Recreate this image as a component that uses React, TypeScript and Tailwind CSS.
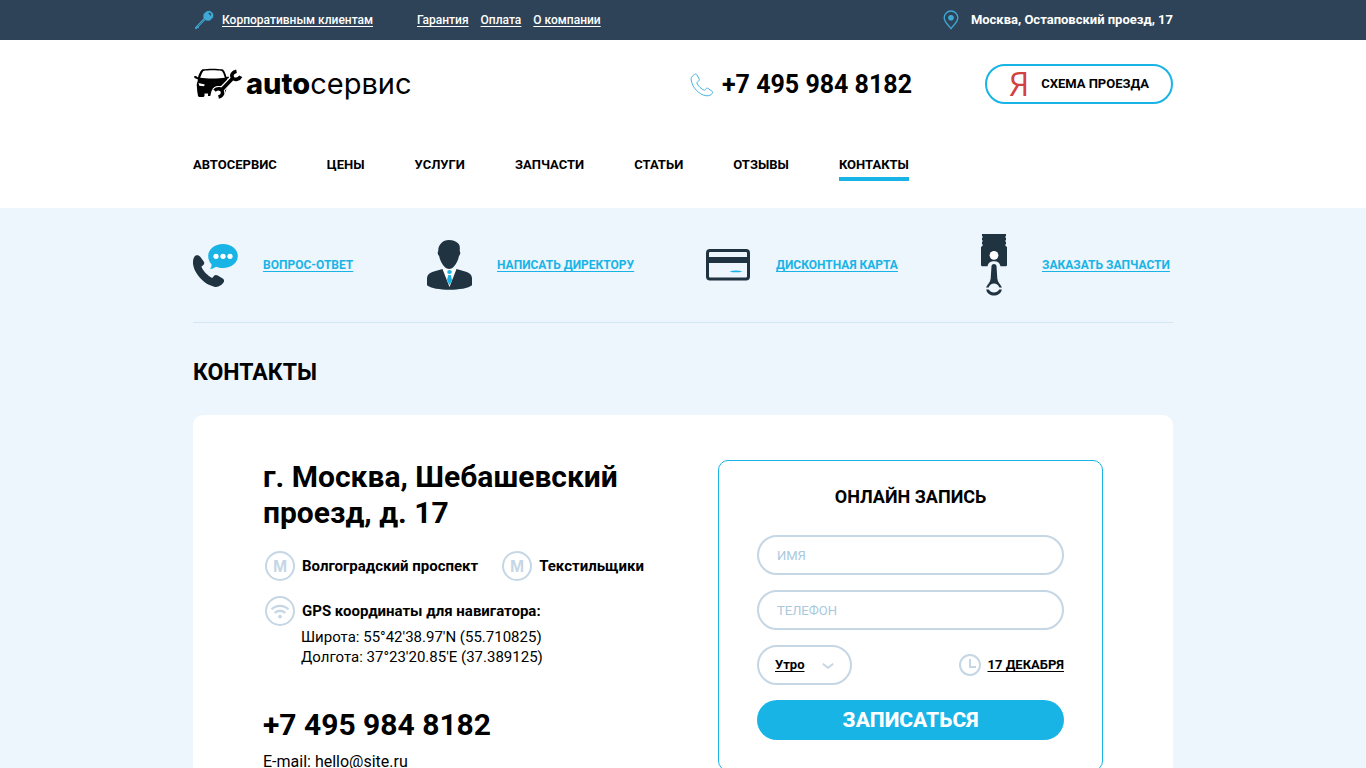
import React, { useState } from "react";

const topLinks = ["Гарантия", "Оплата", "О компании"];

const navItems = [
  "АВТОСЕРВИС",
  "ЦЕНЫ",
  "УСЛУГИ",
  "ЗАПЧАСТИ",
  "СТАТЬИ",
  "ОТЗЫВЫ",
  "КОНТАКТЫ",
];

const stations = ["Волгоградский проспект", "Текстильщики"];

function KeyIcon() {
  return (
    <svg width="20" height="20" viewBox="0 0 20 20" aria-hidden="true">
      <path d="M12.700 1.200 16 .8l3.300 3-.1 3.500-3.500 3.500-3.800-.3-.5-.5-6.700 6.700.4.800-.8.700-.8-.4-.9 1.100-.9.300-.7-.8.200-1.200L9.700 8.300l-.4-1.400.3-2.800z" fill="#3fa9d6" />
      <path d="m14.300 3.300 1.300-.7 1.800 1.900-.8 1.200z" fill="#2e4357" />
      <path d="m3.500 16.500 7.500-7.500" stroke="#2e4357" strokeWidth=".5" />
    </svg>
  );
}

function PinIcon() {
  return (
    <svg width="16" height="20" viewBox="0 0 16 20" fill="none" aria-hidden="true">
      <path d="M8 1a6.800 6.800 0 0 0-6.800 6.800C1.200 12.200 5.500 15.200 8 18.600c2.500-3.400 6.800-6.400 6.800-10.800A6.800 6.800 0 0 0 8 1z" stroke="#3fa9d6" strokeWidth="1.300" />
      <circle cx="8" cy="7.800" r="2.800" fill="#3fa9d6" />
    </svg>
  );
}

function LogoIcon() {
  const wrench = "M43.500 3.200c-4 .8-5.800 4-3.800 6.800 2 2.500 6.500 1.500 8-1.800M39 11 29 21.500M21.500 22.500c2.800-2.500 6.800-2.200 7.800.8s-.8 5-3.800 5.700";

  return (
    <svg width="50" height="32" viewBox="0 0 50 32" aria-hidden="true">
      <path d="M9.500 1.300c5-.9 15-.9 20 0 1.800.8 3.300 5 4 7.700l2-.5.500 1.500-2 1c1 1.500 1 3 1 5L31 28H15v-2.500H11.500V28L10.500 29H6l-1-1-.8-5-.5-6.500L5 11.500 1.500 10 1 8.300l2-.4 2 1.500c1-3.200 2.700-7.300 4.500-8.100z" fill="#000" />
      <path d="M10.500 2.900c5-.8 13.200-.8 18.200 0 1 .5 2.600 4.200 3.100 6.800-5.500 1.100-19 1.100-24.600 0C8.200 7.100 9.500 3.400 10.500 2.900z" fill="#fff" />
      <path d="m5.500 15 6.300 1.500-.8 1.800-4.700-.6z" fill="#fff" />
      <path d="M36 16 25 31h-8.500l2-8c2.500-5 6.500-5 9.500-5l6-6z" fill="#fff" />
      <path d={wrench} fill="none" stroke="#fff" strokeWidth="5.500" />
      <path d={wrench} fill="none" stroke="#000" strokeWidth="3.600" />
    </svg>
  );
}

function PhoneIcon() {
  return (
    <svg width="24" height="24" viewBox="0 0 24 24" fill="none" aria-hidden="true">
      <path d="M3.500 2.200C1.800 3.500.8 5 1.200 7c1 7.300 7.400 14.500 14.700 15.700 3.200.5 5.300-.7 6.500-2.600.4-.8.2-1.400-.5-2l-3.700-2.600c-.8-.5-1.500-.4-2.100.2l-1.500 1.600c-3-.8-6.700-4.300-7.900-7.600l2-1.800c.7-.6.8-1.200.4-2L7 1.900C6.300.8 5.300.8 4.500 1.400z" stroke="#45b4dd" strokeWidth="1" />
    </svg>
  );
}

function QuestionIcon() {
  return (
    <svg width="46" height="44" viewBox="0 0 46 44" aria-hidden="true">
      <path d="M30 1c8.300 0 14.800 5.200 14.800 12S38.300 25 30 25c-2.500 0-5-.4-7-1.300-1.500 1-3.500 2.200-6 2.300 1.300-1.500 1.700-3 1.500-4.800-2.200-2.300-3.300-5-3.300-8.200C15.200 6.200 21.700 1 30 1z" fill="#19b4e6" />
      <circle cx="23" cy="13.300" r="2.600" fill="#fff" />
      <circle cx="30" cy="13.300" r="2.600" fill="#fff" />
      <circle cx="37" cy="13.300" r="2.600" fill="#fff" />
      <path d="M2.600 12.600c1.800-1 3.600-.3 4.600 1.100l3.500 4.700c1 1.500.5 3-.6 3.900l-1.700 1.300c1.500 4.300 5.800 9 10.800 11.400l1.500-1.800c1-1.200 2.500-1.500 4-.6l5 3c1.500 1 1.800 2.700.8 4-2 3-5.400 5-9.300 4.100C10.600 41.500.8 30 0 20.600c-.2-3.700.6-6.500 2.600-8z" fill="#203341" />
    </svg>
  );
}

function DirectorIcon() {
  return (
    <svg width="46" height="50" viewBox="0 0 46 50" aria-hidden="true">
      <path d="M15.500 29h14L22.500 48z" fill="#fff" />
      <path d="M22 0c4 0 7.500 1.500 9.500 3.800 1.400 1.600 1.500 4.200 1.200 7.200 1 1 .6 3.800-.7 5-.8 4.500-3 8.500-5.800 11.300-2.300 2.300-5.800 2.300-8.200 0-2.900-2.800-5-6.800-5.900-11.300-1.500-1.200-1.800-4-.8-5-.4-5.500 4-11 10.700-11z" fill="#203341" />
      <path d="M15.500 29 6 31.700c-3.300 1-5.800 3-6 6.300v7.300C7 51.300 38 51.300 45 45.300V38c-.2-3.300-2.700-5.300-6-6.300L29.500 29l-7 18z" fill="#203341" />
      <ellipse cx="22.500" cy="32" rx="2.300" ry="2.100" fill="#19b4e6" />
      <path d="M21.300 35h2.400l1.400 5-2.600 5.200L20 40z" fill="#19b4e6" />
    </svg>
  );
}

function CardIcon() {
  return (
    <svg width="46" height="34" viewBox="0 0 46 34" aria-hidden="true">
      <rect x="1.500" y="2.500" width="41" height="28.500" rx="2.500" fill="none" stroke="#203341" strokeWidth="3" />
      <path d="M1 9h43v6H1z" fill="#203341" />
      <path d="M23.500 23.400c4-1.200 9-1.200 13 0-4 1.200-9 1.200-13 0z" fill="#19b4e6" />
    </svg>
  );
}

function PistonIcon() {
  return (
    <svg width="44" height="64" viewBox="0 0 44 64" aria-hidden="true">
      <path d="M10 1h24v2l-1 1 1 1v2l-1 1 1 1v2l-1 1 1 1.200 1 .8v18.500l-1 .7h-5.500c-.8-4-3.500-5-6.500-5s-5.700 1-6.500 5H10l-1-.7V14l1-.8 1-1.200-1-1V9l1-1-1-1V5l1-1-1-1z" fill="#203341" />
      <circle cx="22" cy="22.300" r="4.400" fill="#fff" />
      <path d="M19.500 33c.3-2.700 4.700-2.700 5 0l.8 12.500c.4 3.500 2.700 5.500 4.700 9h-2.600c-2-5.300-8.800-5.300-10.800 0H14c2-3.500 4.300-5.500 4.700-9z" fill="#203341" />
      <path d="M14.200 56.500h2.600c2 4 8.400 4 10.400 0h2.600c-1.500 8-14.100 8-15.600 0z" fill="#203341" />
    </svg>
  );
}

function MetroIcon() {
  return (
    <span
      className="flex size-[30px] items-center justify-center rounded-full border-2 border-[#c5d6e4] font-['Liberation_Sans',sans-serif] text-[17px] leading-none text-[#c5d6e4]"
      aria-hidden="true"
    >
      M
    </span>
  );
}

function GpsIcon() {
  return (
    <svg width="30" height="30" viewBox="0 0 30 30" fill="none" aria-hidden="true">
      <circle cx="15" cy="15" r="14" stroke="#c5d6e4" strokeWidth="2" />
      <path d="M6.500 13.300c4.800-4.700 12.200-4.700 17 0M9.700 17c3-3 7.600-3 10.600 0" stroke="#c5d6e4" strokeWidth="2.300" />
      <circle cx="15" cy="20.600" r="1.900" fill="#c5d6e4" />
    </svg>
  );
}

function ClockIcon() {
  return (
    <svg width="22" height="22" viewBox="0 0 22 22" fill="none" aria-hidden="true">
      <circle cx="11" cy="11" r="10" stroke="#c5d6e4" strokeWidth="2" />
      <path d="M11 5v8h6" stroke="#c5d6e4" strokeWidth="2" />
    </svg>
  );
}

const quickLinks = [
  { label: "ВОПРОС-ОТВЕТ", icon: <QuestionIcon /> },
  { label: "НАПИСАТЬ ДИРЕКТОРУ", icon: <DirectorIcon /> },
  { label: "ДИСКОНТНАЯ КАРТА", icon: <CardIcon /> },
  { label: "ЗАКАЗАТЬ ЗАПЧАСТИ", icon: <PistonIcon /> },
];

function TopBar() {
  return (
    <div className="bg-[#2e4357] text-white">
      <div className="mx-auto flex h-10 max-w-[980px] items-center text-[13px]">
        <a href="#corporate" className="flex items-center gap-2 pl-px text-[12px] font-medium">
          <KeyIcon />
          <span className="underline underline-offset-2">Корпоративным клиентам</span>
        </a>
        <div className="ml-11 flex gap-3 text-[12px] font-medium">
          {topLinks.map((label) => (
            <a key={label} href="#" className="underline underline-offset-2">
              {label}
            </a>
          ))}
        </div>
        <div className="ml-auto flex items-center gap-3 font-bold">
          <PinIcon />
          <span>Москва, Остаповский проезд, 17</span>
        </div>
      </div>
    </div>
  );
}

function Header() {
  return (
    <header className="mx-auto max-w-[980px]">
      <div className="flex h-[88px] items-center">
        <a href="#" className="flex items-center gap-[3px]" aria-label="autoсервис">
          <LogoIcon />
          <span className="font-['Inter','Roboto',sans-serif] text-[29px] leading-8">
            <b className="font-extrabold">auto</b>сервис
          </span>
        </a>
        <a href="tel:+74959848182" className="ml-auto flex items-center gap-2 pt-0.5 text-[25px] font-bold">
          <PhoneIcon />
          +7 495 984 8182
        </a>
        <a
          href="#map"
          className="ml-[73px] flex h-10 w-[188px] items-center justify-center gap-3 rounded-full border-2 border-[#19b4e6] text-[13px] font-bold"
        >
          <span className="font-['Liberation_Sans_Narrow','Open_Sans',sans-serif] text-[32px] leading-8 font-normal text-[#d0433f]">
            Я
          </span>
          СХЕМА ПРОЕЗДА
        </a>
      </div>
      <nav className="flex h-20 max-w-[716px] items-start justify-between pt-[27px]">
        {navItems.map((label) => (
          <a
            key={label}
            href="#"
            className={
              label === "КОНТАКТЫ"
                ? "border-b-4 border-[#19b4e6] pb-0.5 text-[13px] leading-5 font-bold"
                : "text-[13px] leading-5 font-bold"
            }
          >
            {label}
          </a>
        ))}
      </nav>
    </header>
  );
}

function QuickLinks() {
  return (
    <div className="grid h-[115px] grid-cols-[234fr_279fr_266fr_201fr] items-center border-b border-[#d3e7f3]">
      {quickLinks.map((item) => (
        <a key={item.label} href="#" className="flex items-center text-[12px] font-bold text-[#19b4e6]">
          <span className="w-[70px] shrink-0">{item.icon}</span>
          <span className="underline underline-offset-2">{item.label}</span>
        </a>
      ))}
    </div>
  );
}

function BookingForm() {
  const [name, setName] = useState("");
  const [phone, setPhone] = useState("");
  const [time, setTime] = useState("Утро");

  return (
    <form
      onSubmit={(e) => e.preventDefault()}
      className="flex w-[385px] shrink-0 flex-col gap-[15px] rounded-[10px] border border-[#19b4e6] px-[38px] pt-[22px] pb-[30px]"
    >
      <h2 className="mb-[9px] text-center text-[18px] leading-7 font-bold">ОНЛАЙН ЗАПИСЬ</h2>
      <input
        type="text"
        aria-label="Имя"
        placeholder="ИМЯ"
        value={name}
        onChange={(e) => setName(e.target.value)}
        className="h-10 rounded-full border-2 border-[#c5d6e4] px-[18px] text-[13px] placeholder:text-[#a9c9dd]"
      />
      <input
        type="tel"
        aria-label="Телефон"
        placeholder="ТЕЛЕФОН"
        value={phone}
        onChange={(e) => setPhone(e.target.value)}
        className="h-10 rounded-full border-2 border-[#c5d6e4] px-[18px] text-[13px] placeholder:text-[#a9c9dd]"
      />
      <div className="flex items-center justify-between">
        <div className="relative">
          <select
            aria-label="Время"
            value={time}
            onChange={(e) => setTime(e.target.value)}
            className="h-10 w-[95px] appearance-none rounded-full border-2 border-[#c5d6e4] pl-4 text-[13px] font-bold underline underline-offset-2"
          >
            <option>Утро</option>
            <option>День</option>
            <option>Вечер</option>
          </select>
          <svg
            width="12"
            height="6"
            viewBox="0 0 12 6"
            fill="none"
            className="pointer-events-none absolute top-[18px] right-[18px]"
            aria-hidden="true"
          >
            <path d="m.7.8 5.300 4 5.300-4" stroke="#c5d6e4" strokeWidth="1.800" />
          </svg>
        </div>
        <button type="button" className="flex items-center gap-1.5 text-[13px] font-bold">
          <ClockIcon />
          <span className="underline underline-offset-2">17 ДЕКАБРЯ</span>
        </button>
      </div>
      <button type="submit" className="h-10 rounded-full bg-[#19b4e6] pt-0.5 text-[21px] font-extrabold text-white">
        ЗАПИСАТЬСЯ
      </button>
    </form>
  );
}

function Contacts() {
  return (
    <section className="flex items-start justify-between rounded-t-[10px] bg-white px-[70px] pt-11 pb-10">
      <div>
        <h2 className="max-w-[380px] text-[30px] leading-9 font-bold">
          г. Москва, Шебашевский проезд, д. 17
        </h2>
        <div className="mt-5 flex gap-6 pl-0.5 text-[15px] font-bold">
          {stations.map((station) => (
            <div key={station} className="flex items-center gap-[7px]">
              <MetroIcon />
              {station}
            </div>
          ))}
        </div>
        <div className="mt-[15px] flex items-center gap-[7px] pl-0.5 text-[15px] font-bold">
          <GpsIcon />
          GPS координаты для навигатора:
        </div>
        <p className="mt-px pl-[38px] text-[15px] leading-5">
          Широта: 55°42′38.97′N (55.710825)
          <br />
          Долгота: 37°23′20.85′E (37.389125)
        </p>
        <a href="tel:+74959848182" className="mt-10 block text-[30px] leading-9 font-bold">
          +7 495 984 8182
        </a>
        <p className="mt-[7px] text-[16px] leading-6">E-mail: hello@site.ru</p>
      </div>
      <div className="pt-px">
        <BookingForm />
      </div>
    </section>
  );
}

export default function App() {
  return (
    <div className="min-h-screen bg-white font-['Roboto','Liberation_Sans',sans-serif] text-black">
      <TopBar />
      <Header />
      <main className="bg-[#edf5fd]">
        <div className="mx-auto max-w-[980px]">
          <QuickLinks />
          <h1 className="pt-8 pb-6 text-[23px] leading-9 font-bold">КОНТАКТЫ</h1>
          <Contacts />
        </div>
      </main>
    </div>
  );
}
